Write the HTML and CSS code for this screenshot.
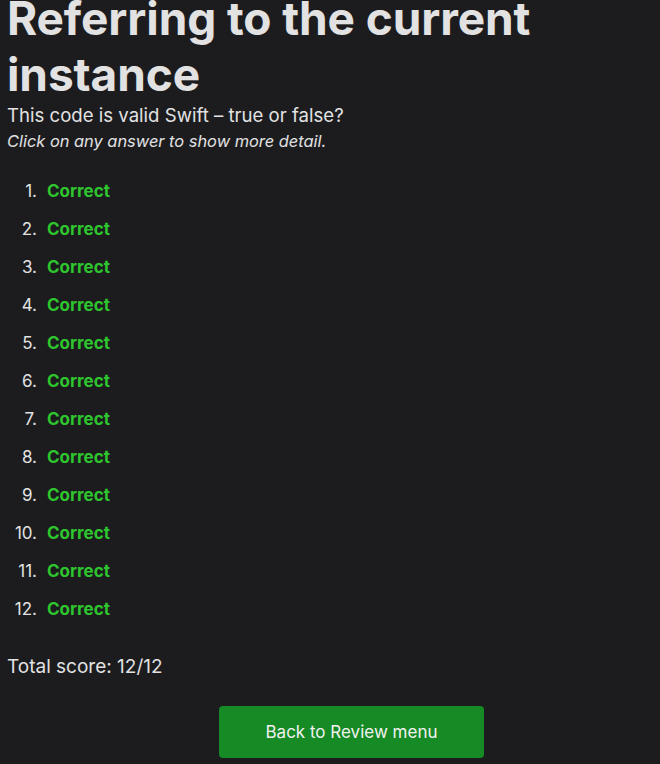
FILE: index.html
```html
<!DOCTYPE html>
<html>
<head>
<meta charset="utf-8">
<link rel="stylesheet" href="styles.css">
</head>
<body>
<main class="page">
  <h1 class="title">Referring to the current instance</h1>
  <p class="question">This code is valid Swift – true or false?</p>
  <p class="hint">Click on any answer to show more detail.</p>
  <ol class="answers">
    <li><span class="correct">Correct</span></li>
    <li><span class="correct">Correct</span></li>
    <li><span class="correct">Correct</span></li>
    <li><span class="correct">Correct</span></li>
    <li><span class="correct">Correct</span></li>
    <li><span class="correct">Correct</span></li>
    <li><span class="correct">Correct</span></li>
    <li><span class="correct">Correct</span></li>
    <li><span class="correct">Correct</span></li>
    <li><span class="correct">Correct</span></li>
    <li><span class="correct">Correct</span></li>
    <li><span class="correct">Correct</span></li>
  </ol>
  <p class="score">Total score: 12/12</p>
  <div class="actions">
    <button class="back">Back to Review menu</button>
  </div>
</main>
</body>
</html>
```
FILE: styles.css
```css
html, body {
  margin: 0;
  padding: 0;
  background: #1c1c1e;
}
body {
  font-family: Inter, "Noto Sans", sans-serif;
  color: #e2e2e3;
}
.page {
  padding: 0 7px;
}
.title {
  margin: -10px 0 0;
  font-size: 46px;
  font-weight: 700;
  line-height: 56px;
  letter-spacing: -0.1px;
  color: #e2e2e3;
}
.question {
  margin: 0;
  font-size: 18.6px;
  line-height: 26px;
}
.hint {
  margin: 1px 0 0;
  font-size: 16.4px;
  font-style: italic;
  line-height: 24px;
}
.answers {
  margin: 27px 0 0;
  padding: 0;
  list-style: none;
  counter-reset: item;
  font-size: 17px;
}
.answers li {
  display: flex;
  gap: 10px;
  line-height: 22px;
  margin-bottom: 16px;
  counter-increment: item;
}
.answers li::before {
  content: counter(item) ".";
  width: 30px;
  text-align: right;
  color: #e2e2e3;
}
.correct {
  color: #2ec52e;
  font-weight: 700;
}
.score {
  margin: 35px 0 0;
  font-size: 19px;
  line-height: 24px;
}
.actions {
  display: flex;
  justify-content: center;
  padding-left: 43px;
  margin-top: 27px;
}
.back {
  width: 265px;
  height: 52px;
  border: none;
  border-radius: 4px;
  background: #168a24;
  color: #f2f2f2;
  font-family: Inter, "Noto Sans", sans-serif;
  font-size: 17px;
}
```
